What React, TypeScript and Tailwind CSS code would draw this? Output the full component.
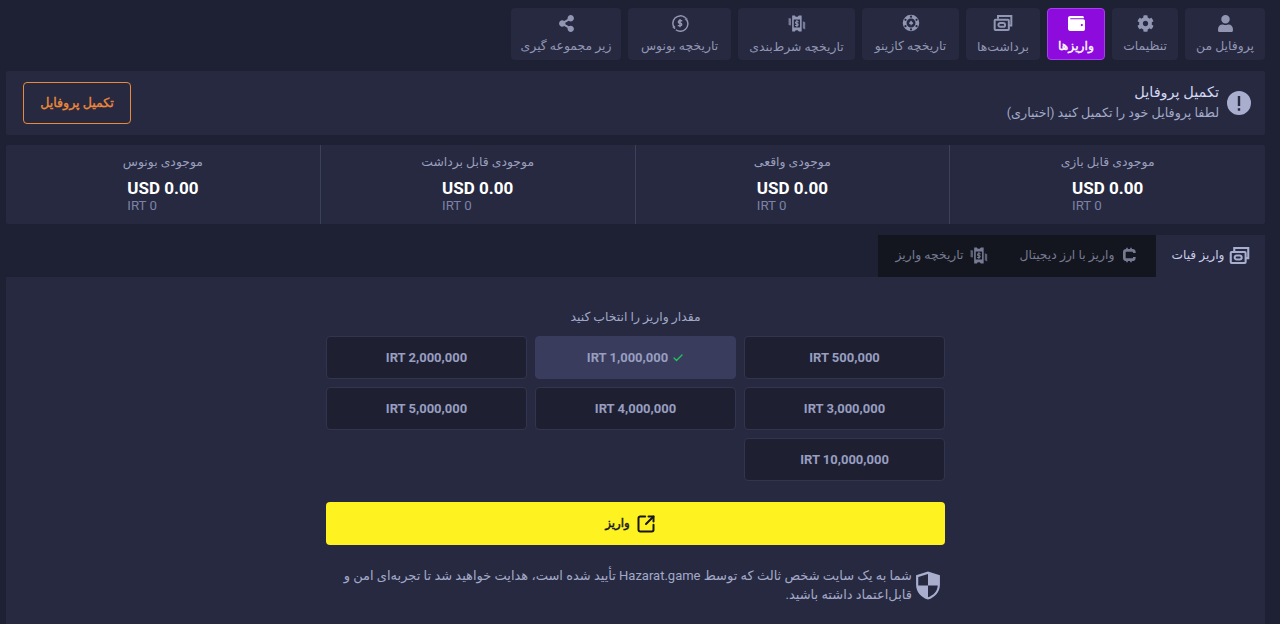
import { FaUser, FaCog, FaWallet, FaShareAlt } from "react-icons/fa";
import { Check, SquareArrowOutUpRight } from "lucide-react";

const fontStack = "font-['Roboto','DejaVu_Sans',sans-serif]";
// DejaVu bold is much wider than the picture's face, so fake the weight with a stroke
const heavy = "[-webkit-text-stroke:0.35px_currentColor]";

function MoneyIcon({ className }: { className?: string }) {
  return (
    <svg viewBox="0 0 24 24" className={className} fill="none" stroke="currentColor" strokeWidth="2.4">
      <path d="M6 7V3.500h16V15h-3" />
      <rect x="2" y="8" width="17" height="12.500" rx="1" />
      <rect x="6.500" y="12" width="8" height="4.500" rx="2.200" />
    </svg>
  );
}

function TicketIcon({ className }: { className?: string }) {
  return (
    <svg viewBox="0 0 24 24" className={className} fill="currentColor">
      <path d="M6.500 2h3.500l1 1.500h2.500L15 2h3.500v20H15l-1.500-1.500H11L10 22H6.500z" />
      <path d="M2 5l3 .7v8.800l-3-.7zM20 9l3 1.500v9L20 18z" opacity=".75" />
      <rect x="8.500" y="7" width="8" height="10" fill="#262940" />
      <path d="M12.500 7.500v9M14.800 9.800h-3.200a1.300 1.300 0 0 0 0 2.400h1.800a1.300 1.300 0 0 1 0 2.400h-3.200" fill="none" stroke="currentColor" strokeWidth="1.300" />
    </svg>
  );
}

function DollarCycleIcon({ className }: { className?: string }) {
  return (
    <svg viewBox="0 0 24 24" className={className} fill="none" stroke="currentColor" strokeWidth="2">
      <path d="M4.500 18.500A10 10 0 0 1 18.500 4.500M20.500 7a10 10 0 0 1-14 14" />
      <path d="M12 6.500v11M15 9h-4a1.700 1.700 0 0 0 0 3.200h2a1.700 1.700 0 0 1 0 3.300H9" strokeWidth="1.900" />
      <path d="M2.500 17.500l2.500 2.500-.2-3.800zM21.500 6.500L19 4l.2 3.800z" strokeWidth="1.200" />
    </svg>
  );
}

function ChipIcon({ className }: { className?: string }) {
  return (
    <svg viewBox="0 0 24 24" className={className} fill="currentColor">
      <path fillRule="evenodd" d="M12 1a11 11 0 1 1 0 22 11 11 0 0 1 0-22zm0 5a6 6 0 1 0 0 12 6 6 0 0 0 0-12z" />
      <path d="M12 8.500l3.200 3.800-1.800 1.700-.8-.6.400 1.600h-1.600l.4-1.600-.8.6-1.800-1.700z" />
      <circle cx="12" cy="3.500" r="1.500" fill="#262940" />
      <circle cx="12" cy="20.500" r="1.500" fill="#262940" />
      <circle cx="4.600" cy="7.700" r="1.500" fill="#262940" />
      <circle cx="19.400" cy="7.700" r="1.500" fill="#262940" />
      <circle cx="4.600" cy="16.300" r="1.500" fill="#262940" />
      <circle cx="19.400" cy="16.300" r="1.500" fill="#262940" />
    </svg>
  );
}

function BitcoinIcon({ className }: { className?: string }) {
  return (
    <svg viewBox="0 0 24 24" className={className} fill="none" stroke="currentColor" strokeWidth="4">
      <path d="M20 9V8a3 3 0 0 0-3-3H8A3 3 0 0 0 5 8v8a3 3 0 0 0 3 3h9a3 3 0 0 0 3-3v-1" />
      <path d="M9 1v4M15 1v4M9 19v4M15 19v4" strokeWidth="2.400" />
    </svg>
  );
}

function ShieldIcon({ className }: { className?: string }) {
  return (
    <svg viewBox="0 0 24 28" className={className} fill="currentColor">
      <path
        fillRule="evenodd"
        d="M12 1L1 4.500V13c0 7 4.500 11.800 11 14 6.500-2.200 11-7 11-14V4.500zM12 3.300v10.700H3V6.200zM12 14h9c-.3 5.400-3.700 9-9 10.800z"
      />
    </svg>
  );
}

function AlertIcon({ className }: { className?: string }) {
  return (
    <svg viewBox="0 0 24 24" className={className} fill="currentColor">
      <path
        fillRule="evenodd"
        d="M12 0a12 12 0 1 1 0 24 12 12 0 0 1 0-24zM10.800 5v10h2.400V5zm0 12.200v2.600h2.400v-2.600z"
      />
    </svg>
  );
}

const navItems = [
  { label: "پروفایل من", icon: <FaUser className="w-[17px] h-[17px]" />, w: "w-[80px]" },
  { label: "تنظیمات", icon: <FaCog className="w-[17px] h-[17px]" />, w: "w-[66px]" },
  { label: "واریزها", icon: <FaWallet className="w-[19px] h-[17px]" />, w: "w-[58px]", active: true },
  { label: "برداشت‌ها", icon: <MoneyIcon className="w-[20px] h-[20px]" />, w: "w-[74px]" },
  { label: "تاریخچه کازینو", icon: <ChipIcon className="w-[18px] h-[18px]" />, w: "w-[97px]" },
  { label: "تاریخچه شرط‌بندی", icon: <TicketIcon className="w-[19px] h-[19px]" />, w: "w-[117px]" },
  { label: "تاریخچه بونوس", icon: <DollarCycleIcon className="w-[18px] h-[18px]" />, w: "w-[103px]" },
  { label: "زیر مجموعه گیری", icon: <FaShareAlt className="w-[17px] h-[17px]" />, w: "w-[110px]" },
];

const balances = ["موجودی قابل بازی", "موجودی واقعی", "موجودی قابل برداشت", "موجودی بونوس"];

const amounts = [
  { label: "IRT 500,000" },
  { label: "IRT 1,000,000", selected: true },
  { label: "IRT 2,000,000" },
  { label: "IRT 3,000,000" },
  { label: "IRT 4,000,000" },
  { label: "IRT 5,000,000" },
  { label: "IRT 10,000,000" },
];

export default function App() {
  return (
    <div dir="rtl" className={`${fontStack} h-[624px] overflow-hidden bg-[#1e2034] pr-[15px] pl-[6px] pt-[8px] text-[#a3a9c9]`}>
      {/* Nav */}
      <div className="flex gap-[7px]">
        {navItems.map((item) => (
          <div
            key={item.label}
            className={`${item.w} h-[52px] shrink-0 rounded-[4px] flex flex-col items-center justify-center gap-[5px] whitespace-nowrap text-[12.4px] ${
              item.active ? `bg-[#8e0bdd] border border-[#a63ff0] text-white ${heavy}` : "bg-[#262940] text-[#9296b3]"
            }`}
          >
            {item.icon}
            <span className="leading-[17px]">{item.label}</span>
          </div>
        ))}
      </div>

      {/* Complete profile banner */}
      <div className="mt-[11px] h-[64px] rounded-[2px] bg-[#262940] flex items-center justify-between pr-[14px] pl-[17px]">
        <div className="flex items-center gap-[8px]">
          <AlertIcon className="w-[24px] h-[24px] text-[#a9aecf]" />
          <div>
            <div className="text-[14.500px] leading-[20px] text-[#d3d7f2]">تکمیل پروفایل</div>
            <div className="text-[12.700px] leading-[20px] text-[#a3a9c9]">لطفا پروفایل خود را تکمیل کنید (اختیاری)</div>
          </div>
        </div>
        <button className={`w-[108px] h-[42px] rounded-[4px] border border-[#e88a3c] text-[#ee8a3a] text-[12.600px] ${heavy}`}>
          تکمیل پروفایل
        </button>
      </div>

      {/* Balances */}
      <div className="mt-[10px] h-[79px] rounded-[2px] bg-[#262940] grid grid-cols-4">
        {balances.map((label, i) => (
          <div key={label} className={`flex flex-col items-center pt-[8px] ${i > 0 ? "border-r border-[#3d4059]" : ""}`}>
            <div className="text-[12.400px] leading-[18px] text-[#9a9fbd]">{label}</div>
            <div dir="ltr" className="mt-[8px]">
              <div className="text-[17px] leading-[19px] font-bold text-white">USD 0.00</div>
              <div className="text-[13.300px] leading-[15px] text-[#7d83a6]">IRT 0</div>
            </div>
          </div>
        ))}
      </div>

      {/* Deposit tabs */}
      <div className="mt-[11px] h-[42px] flex">
        <div className="w-[109px] bg-[#262940] flex items-center justify-center gap-[4px] pb-[1px] text-[12.200px] text-[#c9cdea]">
          <MoneyIcon className="w-[21px] h-[21px] text-[#a9aecf]" />
          <span>واریز فیات</span>
        </div>
        <div className="w-[278px] bg-[#14161f] flex items-center pb-[1px] text-[12.400px] text-[#767a92]">
          <div className="w-[155px] flex items-center justify-center gap-[7px]">
            <BitcoinIcon className="w-[16px] h-[18px]" />
            <span>واریز با ارز دیجیتال</span>
          </div>
          <div className="flex-1 flex items-center justify-center gap-[5px] pl-[4px]">
            <TicketIcon className="w-[19px] h-[19px] [&_rect]:fill-[#14161f]" />
            <span>تاریخچه واریز</span>
          </div>
        </div>
      </div>

      {/* Deposit panel */}
      <div className="h-[347px] bg-[#262940] flex flex-col items-center pt-[31px]">
        <div className="text-[12.400px] leading-[18px] text-[#a3a9c9]">مقدار واریز را انتخاب کنید</div>
        <div className="w-[619px] mt-[10px] grid grid-cols-3 gap-[8px]">
          {amounts.map((a) => (
            <button
              key={a.label}
              className={`h-[43px] rounded-[4px] border flex items-center justify-center gap-[4px] text-[13px] font-bold text-[#989ec0] ${
                a.selected ? "bg-[#393c5c] border-[#393c5c]" : "bg-[#1e2032] border-[#32354f]"
              }`}
            >
              {a.selected && <Check className="w-[12px] h-[12px] text-[#22c55e]" strokeWidth={2.5} />}
              <span dir="ltr">{a.label}</span>
            </button>
          ))}
        </div>
        <button className="w-[619px] h-[43px] mt-[21px] pr-[10px] rounded-[4px] bg-[#fff221] flex items-center justify-center gap-[6px] text-[11.800px] text-[#15161f]">
          <SquareArrowOutUpRight className="w-[20px] h-[20px]" strokeWidth={2.4} />
          <span className="[-webkit-text-stroke:0.45px_currentColor]">واریز</span>
        </button>
        <div className="w-[619px] mt-[21px] flex items-center gap-[3px] pr-[4px]">
          <ShieldIcon className="w-[26px] h-[31px] shrink-0 text-[#a9aecf]" />
          <p className="text-[13px] leading-[19px] text-[#a3a9c9]">
            شما به یک سایت شخص ثالث که توسط Hazarat.game تأیید شده است، هدایت خواهید شد تا تجربه‌ای امن و قابل‌اعتماد داشته باشید.
          </p>
        </div>
      </div>
    </div>
  );
}
